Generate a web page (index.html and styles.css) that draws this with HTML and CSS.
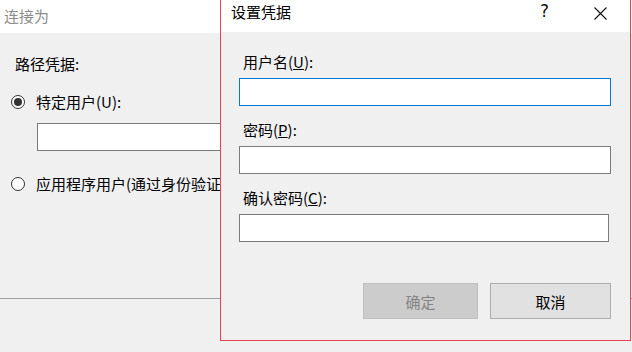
FILE: index.html
```html
<!DOCTYPE html>
<html>
<head>
  <meta charset="utf-8">
  <title>设置凭据</title>
  <link rel="stylesheet" href="styles.css">
</head>
<body>
  <!-- background window: 连接为 -->
  <div class="window">
    <div class="window-title">连接为</div>
    <div class="pane">
      <div class="group-heading">路径凭据:</div>
      <div class="radio-row">
        <span class="radio checked"></span>
        <span>特定用户(U):</span>
      </div>
      <div class="field-back"></div>
      <div class="radio-row second">
        <span class="radio"></span>
        <span>应用程序用户(通过身份验证)</span>
      </div>
    </div>
    <div class="separator"></div>
  </div>

  <!-- dialog on top -->
  <div class="dialog">
    <div class="dialog-title">
      <span class="dialog-name">设置凭据</span>
      <span class="help">?</span>
      <span class="close">
        <svg width="13" height="13" viewBox="0 0 13 13">
          <path d="M0.5 0.5 L12.5 12.5 M12.5 0.5 L0.5 12.5" stroke="#111" stroke-width="1.1" fill="none"/>
        </svg>
      </span>
    </div>
    <div class="dialog-body">
      <label class="field-label">用户名(<u>U</u>):</label>
      <div class="textbox focused"></div>
      <label class="field-label">密码(<u>P</u>):</label>
      <div class="textbox"></div>
      <label class="field-label">确认密码(<u>C</u>):</label>
      <div class="textbox narrow"></div>
      <div class="buttons">
        <button class="btn ok" disabled>确定</button>
        <button class="btn cancel">取消</button>
      </div>
    </div>
  </div>
</body>
</html>
```

FILE: styles.css
```css
html, body {
  margin: 0;
  padding: 0;
}

body {
  width: 632px;
  height: 352px;
  overflow: hidden;
  background: #f0f0f0;
  font-family: "Noto Sans CJK SC", "Microsoft YaHei", sans-serif;
  font-size: 15px;
  color: #000;
  position: relative;
}

/* background window */
.window-title {
  height: 33px;
  line-height: 31px;
  padding-left: 4px;
  background: #fff;
  color: #8c8c8c;
}

.pane {
  padding-left: 11px;
}

.group-heading {
  margin-top: 21px;
  margin-left: 4px;
  line-height: 20px;
}

.radio-row {
  display: flex;
  align-items: center;
  gap: 11px;
  margin-top: 18px;
  line-height: 20px;
  white-space: nowrap;
}

.radio-row.second {
  margin-top: 23px;
}

.radio {
  width: 12px;
  height: 12px;
  border: 1px solid #333;
  border-radius: 50%;
  background: #fff;
  display: flex;
  align-items: center;
  justify-content: center;
}

.radio.checked::after {
  content: "";
  width: 8px;
  height: 8px;
  border-radius: 50%;
  background: #333;
}

.field-back {
  margin-top: 11px;
  margin-left: 26px;
  width: 320px;
  height: 26px;
  border: 1px solid #7a7a7a;
  background: #fff;
}

.separator {
  margin-top: 104px;
  height: 1px;
  background: #a0a0a0;
}

/* dialog */
.dialog {
  position: absolute;
  left: 220px;
  top: -1px;
  width: 409px;
  height: 340px;
  border: 1px solid #e8414f;
  background: #f0f0f0;
}

.dialog-title {
  height: 32px;
  background: #fff;
  position: relative;
}

.dialog-name {
  display: block;
  padding-left: 10px;
  padding-top: 2px;
  line-height: 20px;
}

.help {
  position: absolute;
  left: 319px;
  top: 1px;
  font-family: "Segoe UI", "DejaVu Sans", sans-serif;
  font-size: 17px;
  color: #111;
}

.close {
  position: absolute;
  left: 373px;
  top: 7px;
  width: 13px;
  height: 13px;
  display: block;
}

.close svg {
  display: block;
}

.dialog-body {
  padding-left: 18px;
  display: flex;
  flex-direction: column;
}

.field-label {
  display: block;
  line-height: 20px;
  margin-left: 4px;
  margin-top: 20px;
  margin-bottom: 6px;
}

.textbox {
  width: 370px;
  height: 26px;
  border: 1px solid #7a7a7a;
  background: #fff;
}

.textbox.focused {
  border-color: #0078d7;
}

.textbox.narrow {
  width: 368px;
}

.dialog-body .textbox + .field-label {
  margin-top: 14px;
}

.buttons {
  display: flex;
  gap: 12px;
  margin-top: 41px;
  margin-left: 124px;
}

.btn {
  height: 36px;
  font-family: inherit;
  font-size: 15px;
  padding: 0;
  margin: 0;
  border: 1px solid #adadad;
  background: #e1e1e1;
  color: #000;
}

.btn.ok {
  width: 115px;
  background: #cccccc;
  border-color: #bfbfbf;
  color: #838383;
}

.btn.cancel {
  width: 121px;
}
```
